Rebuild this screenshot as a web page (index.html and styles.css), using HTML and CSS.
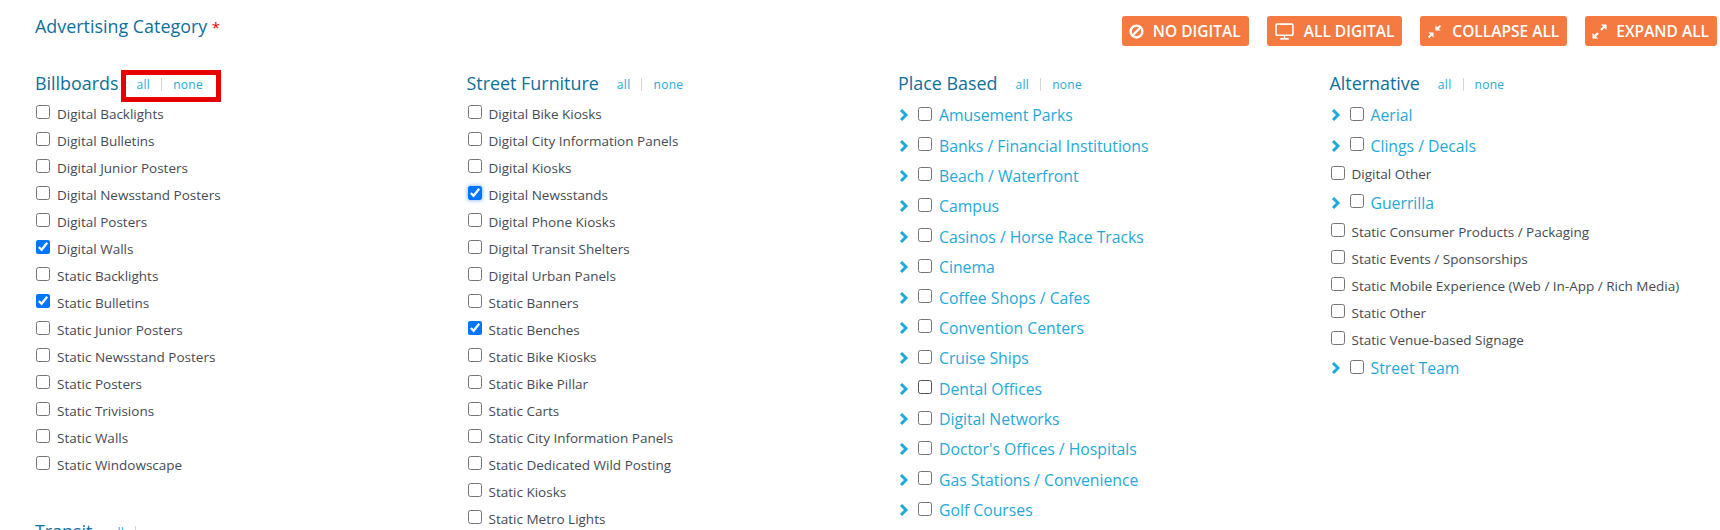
FILE: index.html
```html
<!DOCTYPE html>
<html lang="en">
<head>
    <meta charset="UTF-8">
    <title>Advertising Category</title>
    <link rel="stylesheet" href="styles.css">
</head>
<body>

    <form class="category-form">
        <div class="top-bar">
            <div class="form-title">Advertising Category <span class="required">*</span></div>
            <div class="actions">
                <button type="button" class="action">
                    <svg class="action-icon" viewBox="0 0 16 16"><circle cx="8" cy="8" r="6.300" fill="none" stroke="#fff" stroke-width="2.600"/><path d="M4 12 12 4" stroke="#fff" stroke-width="2.600"/></svg>
                    No Digital
                </button>
                <button type="button" class="action">
                    <svg class="action-icon wide" viewBox="0 0 18 16"><rect x="1" y="1" width="16" height="10.500" rx="1" fill="none" stroke="#fff" stroke-width="1.500"/><path d="M9 12v2.500M5 15h8" stroke="#fff" stroke-width="1.500"/></svg>
                    All Digital
                </button>
                <button type="button" class="action">
                    <svg class="action-icon compress" viewBox="0 0 16 16" fill="#fff"><path d="M9 7V1.500l2 2L13.600 1 15 2.400 12.500 5l2 2z"/><path d="M7 9v5.500l-2-2L2.400 15 1 13.600 3.500 11l-2-2z"/></svg>
                    Collapse All
                </button>
                <button type="button" class="action">
                    <svg class="action-icon" viewBox="0 0 16 16" fill="#fff"><path d="M15.500 .5v6l-2.200-2.200-2.900 2.900-1.600-1.600 2.900-2.900L9.500 .5z"/><path d="M.5 15.500v-6l2.200 2.200 2.900-2.900 1.600 1.600-2.900 2.900 2.200 2.200z"/></svg>
                    Expand All
                </button>
            </div>
        </div>

        <div class="columns">
            <div class="column">
                <section class="group">
                    <h3 class="group-title">Billboards <span class="toggles marked"><a>all</a><i></i><a>none</a></span></h3>
                    <label class="item"><input type="checkbox">Digital Backlights</label>
                    <label class="item"><input type="checkbox">Digital Bulletins</label>
                    <label class="item"><input type="checkbox">Digital Junior Posters</label>
                    <label class="item"><input type="checkbox">Digital Newsstand Posters</label>
                    <label class="item"><input type="checkbox">Digital Posters</label>
                    <label class="item"><input type="checkbox" checked>Digital Walls</label>
                    <label class="item"><input type="checkbox">Static Backlights</label>
                    <label class="item"><input type="checkbox" checked>Static Bulletins</label>
                    <label class="item"><input type="checkbox">Static Junior Posters</label>
                    <label class="item"><input type="checkbox">Static Newsstand Posters</label>
                    <label class="item"><input type="checkbox">Static Posters</label>
                    <label class="item"><input type="checkbox">Static Trivisions</label>
                    <label class="item"><input type="checkbox">Static Walls</label>
                    <label class="item"><input type="checkbox">Static Windowscape</label>
                </section>
                <section class="group next-group">
                    <h3 class="group-title">Transit <span class="toggles"><a>all</a><i></i><a>none</a></span></h3>
                </section>
            </div>

            <div class="column">
                <section class="group">
                    <h3 class="group-title">Street Furniture <span class="toggles"><a>all</a><i></i><a>none</a></span></h3>
                    <label class="item"><input type="checkbox">Digital Bike Kiosks</label>
                    <label class="item"><input type="checkbox">Digital City Information Panels</label>
                    <label class="item"><input type="checkbox">Digital Kiosks</label>
                    <label class="item"><input type="checkbox" class="focused" checked>Digital Newsstands</label>
                    <label class="item"><input type="checkbox">Digital Phone Kiosks</label>
                    <label class="item"><input type="checkbox">Digital Transit Shelters</label>
                    <label class="item"><input type="checkbox">Digital Urban Panels</label>
                    <label class="item"><input type="checkbox">Static Banners</label>
                    <label class="item"><input type="checkbox" checked>Static Benches</label>
                    <label class="item"><input type="checkbox">Static Bike Kiosks</label>
                    <label class="item"><input type="checkbox">Static Bike Pillar</label>
                    <label class="item"><input type="checkbox">Static Carts</label>
                    <label class="item"><input type="checkbox">Static City Information Panels</label>
                    <label class="item"><input type="checkbox">Static Dedicated Wild Posting</label>
                    <label class="item"><input type="checkbox">Static Kiosks</label>
                    <label class="item"><input type="checkbox">Static Metro Lights</label>
                </section>
            </div>

            <div class="column">
                <section class="group">
                    <h3 class="group-title">Place Based <span class="toggles"><a>all</a><i></i><a>none</a></span></h3>
                    <label class="item parent"><svg class="chevron" viewBox="0 0 10 14"><path d="M2 2l5 5-5 5"/></svg><input type="checkbox">Amusement Parks</label>
                    <label class="item parent"><svg class="chevron" viewBox="0 0 10 14"><path d="M2 2l5 5-5 5"/></svg><input type="checkbox">Banks / Financial Institutions</label>
                    <label class="item parent"><svg class="chevron" viewBox="0 0 10 14"><path d="M2 2l5 5-5 5"/></svg><input type="checkbox">Beach / Waterfront</label>
                    <label class="item parent"><svg class="chevron" viewBox="0 0 10 14"><path d="M2 2l5 5-5 5"/></svg><input type="checkbox">Campus</label>
                    <label class="item parent"><svg class="chevron" viewBox="0 0 10 14"><path d="M2 2l5 5-5 5"/></svg><input type="checkbox">Casinos / Horse Race Tracks</label>
                    <label class="item parent"><svg class="chevron" viewBox="0 0 10 14"><path d="M2 2l5 5-5 5"/></svg><input type="checkbox">Cinema</label>
                    <label class="item parent"><svg class="chevron" viewBox="0 0 10 14"><path d="M2 2l5 5-5 5"/></svg><input type="checkbox">Coffee Shops / Cafes</label>
                    <label class="item parent"><svg class="chevron" viewBox="0 0 10 14"><path d="M2 2l5 5-5 5"/></svg><input type="checkbox">Convention Centers</label>
                    <label class="item parent"><svg class="chevron" viewBox="0 0 10 14"><path d="M2 2l5 5-5 5"/></svg><input type="checkbox">Cruise Ships</label>
                    <label class="item parent"><svg class="chevron" viewBox="0 0 10 14"><path d="M2 2l5 5-5 5"/></svg><input type="checkbox" class="hovered">Dental Offices</label>
                    <label class="item parent"><svg class="chevron" viewBox="0 0 10 14"><path d="M2 2l5 5-5 5"/></svg><input type="checkbox">Digital Networks</label>
                    <label class="item parent"><svg class="chevron" viewBox="0 0 10 14"><path d="M2 2l5 5-5 5"/></svg><input type="checkbox">Doctor's Offices / Hospitals</label>
                    <label class="item parent"><svg class="chevron" viewBox="0 0 10 14"><path d="M2 2l5 5-5 5"/></svg><input type="checkbox">Gas Stations / Convenience</label>
                    <label class="item parent"><svg class="chevron" viewBox="0 0 10 14"><path d="M2 2l5 5-5 5"/></svg><input type="checkbox">Golf Courses</label>
                </section>
            </div>

            <div class="column">
                <section class="group">
                    <h3 class="group-title">Alternative <span class="toggles"><a>all</a><i></i><a>none</a></span></h3>
                    <label class="item parent"><svg class="chevron" viewBox="0 0 10 14"><path d="M2 2l5 5-5 5"/></svg><input type="checkbox">Aerial</label>
                    <label class="item parent"><svg class="chevron" viewBox="0 0 10 14"><path d="M2 2l5 5-5 5"/></svg><input type="checkbox">Clings / Decals</label>
                    <label class="item"><input type="checkbox">Digital Other</label>
                    <label class="item parent"><svg class="chevron" viewBox="0 0 10 14"><path d="M2 2l5 5-5 5"/></svg><input type="checkbox">Guerrilla</label>
                    <label class="item"><input type="checkbox">Static Consumer Products / Packaging</label>
                    <label class="item"><input type="checkbox">Static Events / Sponsorships</label>
                    <label class="item"><input type="checkbox">Static Mobile Experience (Web / In-App / Rich Media)</label>
                    <label class="item"><input type="checkbox">Static Other</label>
                    <label class="item"><input type="checkbox">Static Venue-based Signage</label>
                    <label class="item parent"><svg class="chevron" viewBox="0 0 10 14"><path d="M2 2l5 5-5 5"/></svg><input type="checkbox">Street Team</label>
                </section>
            </div>
        </div>
    </form>

</body>
</html>
```

FILE: styles.css
```css
html, body {
    margin: 0;
    height: 530px;
    overflow: hidden;
}

body {
    font-family: "Open Sans", sans-serif;
    background-color: #fff;
    color: #444b54;
}

.category-form {
    padding: 16px 3px 0 36px;
}

.top-bar {
    display: flex;
    justify-content: space-between;
    align-items: flex-start;
    height: 52px;
}

.form-title {
    margin: -1px 0 0 -1px;
    font-size: 17.900px;
    line-height: 22px;
    color: #0e6f9c;
}

.required {
    color: #e60000;
    font-size: 15px;
}

.actions {
    display: flex;
    gap: 18px;
}

.action {
    display: flex;
    align-items: center;
    gap: 9px;
    height: 30px;
    padding: 0 8px 0 7px;
    background-color: #f47a42;
    color: #fff;
    border: none;
    border-radius: 3px;
    font-family: inherit;
    font-size: 15.500px;
    font-weight: 600;
    text-transform: uppercase;
    white-space: nowrap;
}

.action-icon {
    width: 15px;
    height: 15px;
}

.action-icon.wide {
    width: 19px;
    height: 17px;
    margin: 0 1px;
}

.action-icon.compress {
    margin-right: 1px;
}

.columns {
    display: grid;
    grid-template-columns: repeat(4, 431.5px);
}

.group-title {
    display: flex;
    align-items: center;
    box-sizing: border-box;
    margin: 0 0 0 -1px;
    height: 32px;
    padding-bottom: 2px;
    font-size: 17.900px;
    font-weight: 400;
    color: #0e6f9c;
}

.toggles {
    position: relative;
    display: flex;
    align-items: center;
    margin: 2px 0 0 18px;
    font-size: 12px;
    color: #1fa9d9;
    letter-spacing: 0.3px;
}

.toggles i {
    width: 1px;
    height: 13px;
    margin: 0 11px;
    background-color: #d5d5d5;
}

/* red box from the annotated screenshot */
.toggles.marked::after {
    content: "";
    position: absolute;
    left: -16px;
    right: -18px;
    top: -6px;
    bottom: -9px;
    border: 5px solid #e60000;
}

.item {
    display: flex;
    align-items: center;
    height: 27px;
    font-size: 13.500px;
    white-space: nowrap;
}

.item input {
    width: 14px;
    height: 14px;
    margin: 0 7px 3px 0;
}

.item .focused {
    box-shadow: 0 0 4px rgba(0, 117, 255, 0.6);
}

.item .hovered {
    appearance: none;
    box-sizing: border-box;
    border: 1px solid #4f4f4f;
    border-radius: 2.500px;
}

.parent {
    height: 30.400px;
    font-size: 15.750px;
    color: #1fa9d9;
}

.chevron {
    width: 10px;
    height: 14px;
    margin-right: 9px;
    fill: none;
    stroke: #1fa9d9;
    stroke-width: 3;
}

.next-group {
    margin-top: 38px;
}
```
